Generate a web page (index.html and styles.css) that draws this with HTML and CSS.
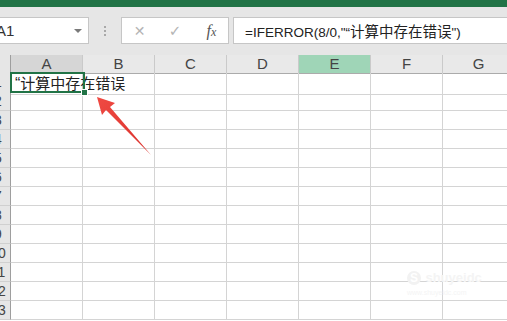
FILE: index.html
```html
<!DOCTYPE html>
<html lang="zh-CN">
<head>
    <meta charset="UTF-8">
    <title>IFERROR</title>
    <link rel="stylesheet" href="styles.css">
</head>
<body>
    <div class="app">
        <div class="titlebar"></div>
        <div class="toolbar">
            <div class="namebox"><span>A1</span><span class="caret"></span></div>
            <div class="grip"><i></i><i></i><i></i></div>
            <div class="fxbox">
                <span class="btn cancel">&#x2715;</span>
                <span class="btn ok">&#x2713;</span>
                <span class="btn fx"><i>f</i><i class="x">x</i></span>
            </div>
            <div class="formula">=IFERROR(8/0,"“<span class="cjk">计算中存在错误</span>")</div>
        </div>
        <div class="sheet">
            <div class="row head">
                <div class="rh corner"></div>
                <div class="ch sel">A</div><div class="ch">B</div><div class="ch">C</div><div class="ch">D</div>
                <div class="ch hi">E</div><div class="ch">F</div><div class="ch">G</div>
            </div>
            <div class="row"><div class="rh">1</div><div class="c val">“<span class="cjk">计算中存在错误</span></div><div class="c"></div><div class="c"></div><div class="c"></div><div class="c"></div><div class="c"></div><div class="c"></div></div>
            <div class="row"><div class="rh">2</div><div class="c"></div><div class="c"></div><div class="c"></div><div class="c"></div><div class="c"></div><div class="c"></div><div class="c"></div></div>
            <div class="row"><div class="rh">3</div><div class="c"></div><div class="c"></div><div class="c"></div><div class="c"></div><div class="c"></div><div class="c"></div><div class="c"></div></div>
            <div class="row"><div class="rh">4</div><div class="c"></div><div class="c"></div><div class="c"></div><div class="c"></div><div class="c"></div><div class="c"></div><div class="c"></div></div>
            <div class="row"><div class="rh">5</div><div class="c"></div><div class="c"></div><div class="c"></div><div class="c"></div><div class="c"></div><div class="c"></div><div class="c"></div></div>
            <div class="row"><div class="rh">6</div><div class="c"></div><div class="c"></div><div class="c"></div><div class="c"></div><div class="c"></div><div class="c"></div><div class="c"></div></div>
            <div class="row"><div class="rh">7</div><div class="c"></div><div class="c"></div><div class="c"></div><div class="c"></div><div class="c"></div><div class="c"></div><div class="c"></div></div>
            <div class="row"><div class="rh">8</div><div class="c"></div><div class="c"></div><div class="c"></div><div class="c"></div><div class="c"></div><div class="c"></div><div class="c"></div></div>
            <div class="row"><div class="rh">9</div><div class="c"></div><div class="c"></div><div class="c"></div><div class="c"></div><div class="c"></div><div class="c"></div><div class="c"></div></div>
            <div class="row"><div class="rh">10</div><div class="c"></div><div class="c"></div><div class="c"></div><div class="c"></div><div class="c"></div><div class="c"></div><div class="c"></div></div>
            <div class="row"><div class="rh">11</div><div class="c"></div><div class="c"></div><div class="c"></div><div class="c"></div><div class="c"></div><div class="c"></div><div class="c"></div></div>
            <div class="row"><div class="rh">12</div><div class="c"></div><div class="c"></div><div class="c"></div><div class="c"></div><div class="c"></div><div class="c"></div><div class="c"></div></div>
            <div class="row"><div class="rh">13</div><div class="c"></div><div class="c"></div><div class="c"></div><div class="c"></div><div class="c"></div><div class="c"></div><div class="c"></div></div>
            <div class="selection"><span class="handle"></span></div>
        </div>
    </div>
    <div class="watermark">
        <span class="logo">S</span>
        <span class="brand">shuyeidc</span>
        <span class="site">www.shuyeidc.com</span>
    </div>
    <svg class="arrow" width="507" height="321" viewBox="0 0 507 321">
        <defs>
            <linearGradient id="red" x1="0" y1="0" x2="1" y2="1">
                <stop offset="0" stop-color="#f04a43"/>
                <stop offset="1" stop-color="#d9302b"/>
            </linearGradient>
        </defs>
        <polygon points="97,97 115,103 110,107 151,155 106,110 102,115" fill="url(#red)"/>
    </svg>
</body>
</html>
```

FILE: styles.css
```css
body {
    margin: 0;
    width: 507px;
    height: 321px;
    overflow: hidden;
    background: #fff;
    font-family: "Liberation Sans", "Noto Sans CJK SC", sans-serif;
    color: #222;
    position: relative;
}

.cjk {
    font-family: "Noto Sans CJK SC", sans-serif;
}

.app {
    margin-left: -11px;
    width: 540px;
}

.titlebar {
    height: 7px;
    background: #217346;
}

.toolbar {
    height: 48px;
    box-sizing: border-box;
    padding-top: 10px;
    background: #e6e6e6;
    display: flex;
    align-items: flex-start;
}

.namebox {
    width: 100px;
    height: 27px;
    box-sizing: border-box;
    background: #fff;
    border: 1px solid #c6c6c6;
    display: flex;
    align-items: center;
    justify-content: space-between;
    padding: 0 6px 0 6px;
    font-size: 15px;
    color: #333;
}

.caret {
    width: 0;
    height: 0;
    border-left: 4px solid transparent;
    border-right: 4px solid transparent;
    border-top: 4px solid #7a7a7a;
}

.grip {
    width: 32px;
    height: 27px;
    display: flex;
    flex-direction: column;
    align-items: center;
    justify-content: center;
    gap: 2px;
}

.grip i {
    width: 2px;
    height: 2px;
    background: #a8a8a8;
}

.fxbox {
    width: 108px;
    height: 27px;
    box-sizing: border-box;
    background: #fff;
    border: 1px solid #c6c6c6;
    display: flex;
    align-items: center;
}

.btn {
    width: 36px;
    text-align: center;
    font-size: 15px;
    color: #b4b4b4;
    font-family: "DejaVu Sans", sans-serif;
}

.btn.cancel {
    font-size: 14px;
}

.btn.fx {
    color: #555;
    font-family: "Liberation Serif", serif;
    font-size: 16px;
    padding-left: 2px;
    box-sizing: border-box;
}

.btn.fx .x {
    font-size: 12px;
}

.formula {
    flex: 1;
    height: 27px;
    box-sizing: border-box;
    margin-left: 4px;
    background: #fff;
    border: 1px solid #c6c6c6;
    border-right: none;
    padding-left: 11px;
    font-size: 13.5px;
    line-height: 25px;
    color: #222;
    white-space: nowrap;
}

.formula .cjk {
    font-size: 14.5px;
}

.sheet {
    position: relative;
    background: #fff;
}

.row {
    display: grid;
    grid-template-columns: 22px repeat(7, 72px);
    height: 19px;
}

.row.head {
    height: 18px;
}

.rh {
    background: #e6e6e6;
    border-right: 1px solid #9e9e9e;
    border-bottom: 1px solid #d0d0d0;
    font-size: 14px;
    line-height: 19px;
    text-align: center;
    padding-right: 3px;
    color: #444;
    box-sizing: border-box;
    overflow: hidden;
}

.corner {
    border-bottom: 1px solid #ababab;
}

.ch {
    background: #e9e9e9;
    border-right: 1px solid #cacaca;
    border-bottom: 1px solid #ababab;
    text-align: center;
    font-size: 15px;
    line-height: 18px;
    color: #444;
    box-sizing: border-box;
}

.ch.sel {
    background: #d6d6d6;
}

.ch.hi {
    background: #9fd5b7;
}

.c {
    border-right: 1px solid #d4d4d4;
    border-bottom: 1px solid #d4d4d4;
    box-sizing: border-box;
}

.c.val {
    white-space: nowrap;
    overflow: visible;
    font-size: 16px;
    line-height: 20px;
    padding-left: 4px;
    color: #222;
}

.c.val .cjk {
    font-size: 15px;
}

.selection {
    position: absolute;
    left: 21px;
    top: 17px;
    width: 75px;
    height: 21px;
    box-sizing: border-box;
    border: 2px solid #217346;
}

.handle {
    position: absolute;
    right: -5px;
    bottom: -5px;
    width: 5px;
    height: 5px;
    background: #217346;
    border: 1px solid #fff;
}

.watermark {
    position: absolute;
    left: 407px;
    top: 268px;
    width: 80px;
    color: #f4f4f4;
}

.logo {
    display: inline-block;
    width: 14px;
    height: 14px;
    border-radius: 50%;
    background: #f2f2f2;
    color: #fff;
    font-size: 12px;
    line-height: 14px;
    text-align: center;
    font-weight: bold;
}

.brand {
    font-size: 13px;
    font-weight: bold;
}

.site {
    display: block;
    font-size: 7px;
    margin-top: 3px;
}

.arrow {
    position: absolute;
    left: 0;
    top: 0;
}
```
